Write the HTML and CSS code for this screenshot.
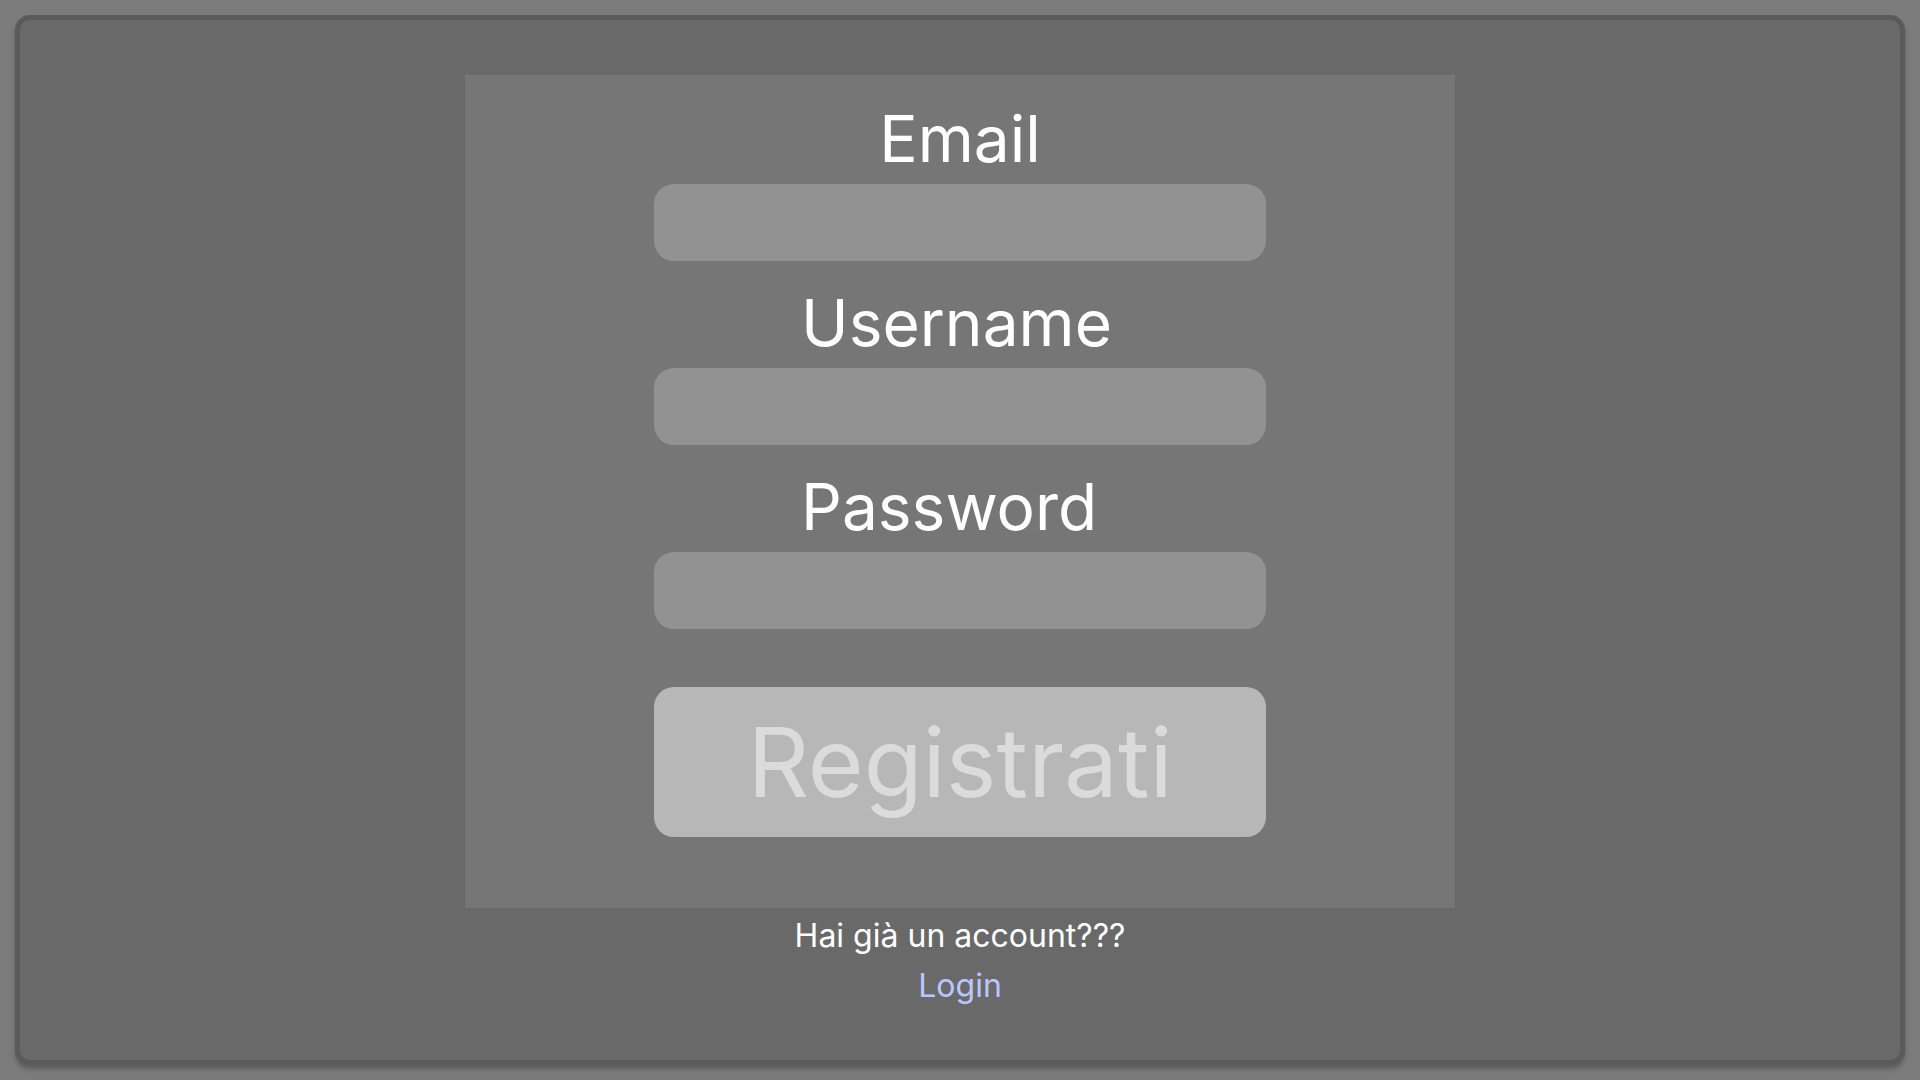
FILE: index.html
```html
<!DOCTYPE html>
<html lang="it">
<head>
<meta charset="utf-8">
<meta name="viewport" content="width=device-width, initial-scale=1">
<title>Registrati</title>
<link rel="stylesheet" href="styles.css">
</head>
<body>
<main class="frame">
  <form class="card">
    <div class="field">
      <label class="centered" for="email">Email</label>
      <input id="email" type="email">
    </div>
    <div class="field">
      <label for="username">Username</label>
      <input id="username" type="text">
    </div>
    <div class="field">
      <label for="password">Password</label>
      <input id="password" type="password">
    </div>
    <button class="submit" type="submit">Registrati</button>
  </form>
  <p class="hint">Hai già un account???</p>
  <a class="login" href="#login">Login</a>
</main>
</body>
</html>
```
FILE: styles.css
```css
* {
  box-sizing: border-box;
}

body {
  margin: 0;
  min-height: 100vh;
  padding: 15px;
  display: flex;
  background: #7b7b7b;
  color: #fff;
  font-family: Inter, "Liberation Sans", sans-serif;
  font-weight: 375;
}

.frame {
  flex: 1;
  display: flex;
  flex-direction: column;
  align-items: center;
  padding: 55px 20px 20px;
  background: #696969;
  border: 5px solid #5a5a5a;
  border-radius: 15px;
  box-shadow: 0 4px 4px rgba(0, 0, 0, 0.25);
}

.card {
  width: 100%;
  max-width: 990px;
  display: flex;
  flex-direction: column;
  align-items: center;
  padding: 25px 24px 71px;
  background: #767676;
}

.field {
  width: 100%;
  max-width: 612px;
  display: flex;
  flex-direction: column;
  align-items: center;
  margin-bottom: 23px;
}

.field label {
  width: 318px;
  font-size: 64px;
  line-height: 77px;
  margin-bottom: 7px;
}

.field .centered {
  text-align: center;
}

.field input {
  width: 100%;
  height: 77px;
  padding: 0 20px;
  border: 0;
  border-radius: 20px;
  background: #929292;
  color: #fff;
  font: inherit;
  font-size: 32px;
}

.submit {
  width: 100%;
  max-width: 612px;
  height: 150px;
  margin-top: 35px;
  padding: 0;
  border: 0;
  border-radius: 20px;
  background: #b7b7b7;
  color: #dbdbdb;
  font: inherit;
  font-size: 96px;
  font-weight: 400;
}

.hint,
.login {
  font-size: 32px;
  line-height: 39px;
}

.hint {
  margin: 8px 0 11px;
}

.login {
  color: #b9c7ff;
  text-decoration: none;
}
```
